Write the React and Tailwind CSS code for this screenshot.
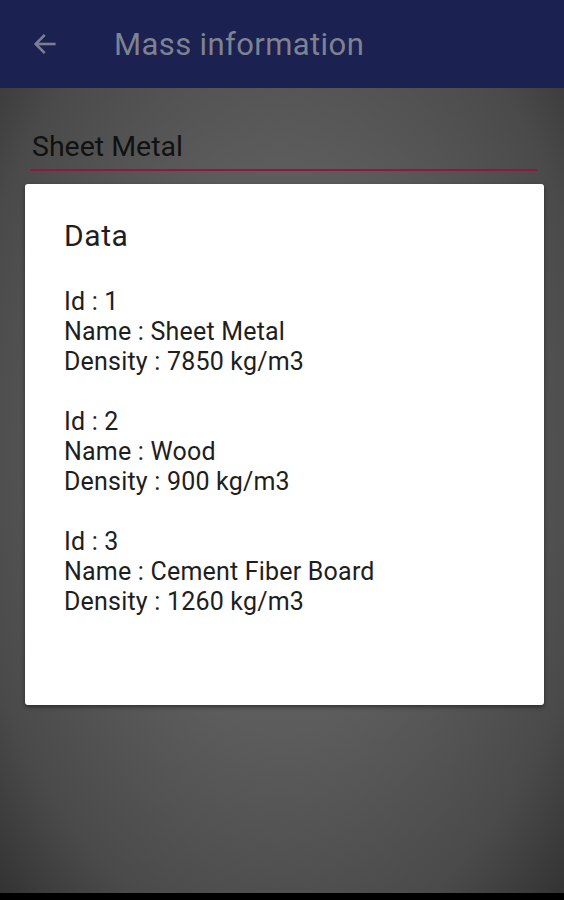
export default function App() {
  const items = [
    { id: 1, name: "Sheet Metal", density: "7850 kg/m3" },
    { id: 2, name: "Wood", density: "900 kg/m3" },
    { id: 3, name: "Cement Fiber Board", density: "1260 kg/m3" },
  ];
  return (
    <div className="h-[900px] w-[564px] flex flex-col overflow-hidden" style={{ fontFamily: "Roboto, 'Noto Sans', sans-serif" }}>
      <header className="h-[88px] shrink-0 bg-[#1b2150] flex items-center">
        <div className="w-[114px] flex items-center pl-[31px]">
          <svg width="28" height="28" viewBox="0 0 24 24" fill="none" stroke="#7b7f90" strokeWidth="2.2" strokeLinecap="square">
            <path d="M20 12H5" />
            <path d="M11 5l-7 7 7 7" />
          </svg>
        </div>
        <h1 className="text-[31px] leading-none text-[#7e8291] tracking-[0.4px] mt-[1px]">Mass information</h1>
      </header>
      <main className="flex-1 bg-[radial-gradient(ellipse_at_50%_45%,#646464_0%,#5c5c5c_45%,#4a4a4a_80%,#333333_100%)] pl-[25px] pr-[20px] pt-[42px]">
        <div className="ml-[5px] mr-[7px] border-b-2 border-[#8c1a3c] pb-[5px]">
          <div className="pl-[2px] text-[28.5px] leading-[34px] text-[#111111]">Sheet Metal</div>
        </div>
        <div className="mt-[13px] h-[521px] bg-white rounded-[3px] shadow-[0_2px_4px_rgba(0,0,0,0.45)] pl-[39px] pt-[34px] text-[#1e1e1e]">
          <div className="text-[30px] leading-[36px] tracking-[0.6px]">Data</div>
          <div className="mt-[33px] text-[25px] leading-[30px] tracking-[0.2px]">
            {items.map((it, i) => (
              <div key={it.id} className={i > 0 ? "mt-[30px]" : ""}>
                <div>Id : {it.id}</div>
                <div>Name : {it.name}</div>
                <div>Density : {it.density}</div>
              </div>
            ))}
          </div>
        </div>
      </main>
      <div className="h-[7px] shrink-0 bg-black" />
    </div>
  );
}
